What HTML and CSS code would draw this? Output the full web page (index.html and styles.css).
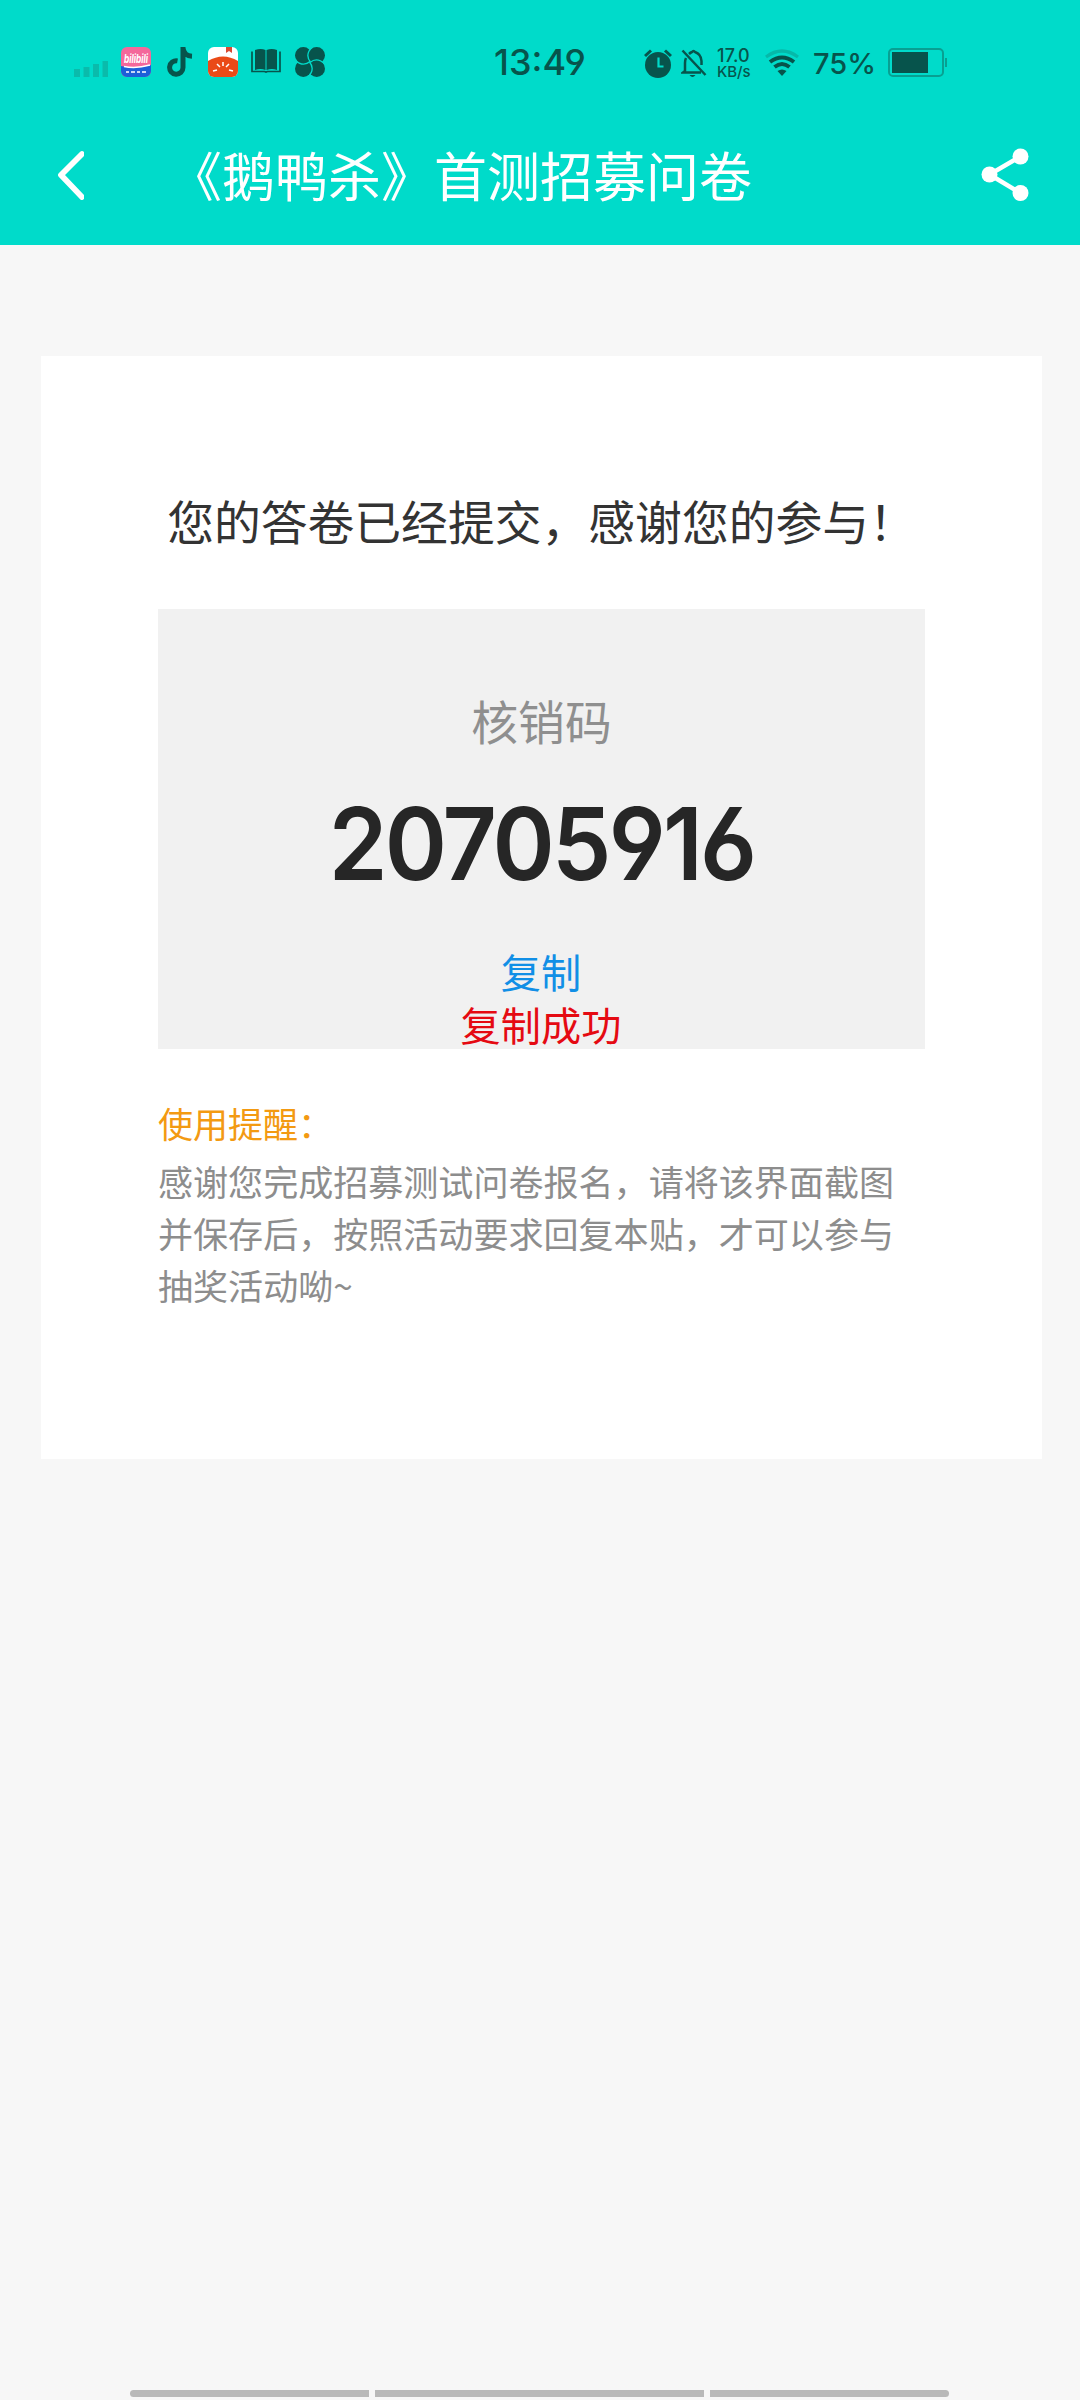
FILE: index.html
```html
<!DOCTYPE html>
<html lang="zh-CN">
<head>
<meta charset="utf-8">
<title>《鹅鸭杀》首测招募问卷</title>
<link rel="stylesheet" href="styles.css">
</head>
<body>
<header class="header">
  <div class="status">
    <div class="status-left">
      <svg class="signal" width="34" height="16" viewBox="0 0 34 16"><path d="M0 8h6v8H0zM9.500 6h6v10h-6zM19 3h6v13h-6zM28.500 0h5.500v16h-5.500z" fill="#0abbab"/></svg>
      <svg class="bili" width="30" height="30" viewBox="0 0 30 30">
        <defs><clipPath id="tile"><rect width="30" height="30" rx="6"/></clipPath></defs>
        <rect width="30" height="30" rx="6" fill="#f4689b"/>
        <path d="M0 19Q15 22.500 30 18V24a6 6 0 0 1-6 6H6a6 6 0 0 1-6-6z" fill="#1c5fd8"/>
        <text x="3" y="16" class="bili-word" textLength="24" lengthAdjust="spacingAndGlyphs">bilibili</text>
        <path d="M3 19.500q12 2.500 26-1.500M5 25h3m2 0h4m2 0h3m2 0h4" stroke="#fff" stroke-width="1.500" fill="none"/>
      </svg>
      <svg class="note" width="26" height="30" viewBox="0 0 26 30"><path d="M16 0v20.500a6.700 6.700 0 1 1-5.500-6.600M16 1c.6 5 4 8 9 8.200" fill="none" stroke="#07544c" stroke-width="5"/></svg>
      <svg class="tomato" width="30" height="30" viewBox="0 0 30 30">
        <g clip-path="url(#tile)">
          <rect width="30" height="30" fill="#fff"/>
          <path d="M0 14Q15 5 30 14V30H0z" fill="#ea4a17"/>
          <path d="M18 0h6v6l-3-2-3 2z" fill="#d94a32"/>
          <path d="M15 15v4M9 17l3 3M21 17l-3 3M5 24l4-1M25 24l-4-1" stroke="#fff" stroke-width="1.500"/>
        </g>
      </svg>
      <svg class="book" width="30" height="24" viewBox="0 0 30 24"><path d="M4 1q6-2 10.500 0v20q-5-2-10.500 0zM15.500 1q5-2 10.500 0v20q-5-2-10.500 0z" fill="#07544c"/><path d="M1 2.500v20h12.500l1.500 .5 1.500-.5H29v-20" fill="none" stroke="#07544c" stroke-width="1.700"/></svg>
      <svg class="pinwheel" width="30" height="30" viewBox="0 0 30 30"><g fill="#07544c"><circle cx="8.300" cy="8.300" r="8.300"/><circle cx="21.700" cy="8.300" r="8.300"/><circle cx="21.700" cy="21.700" r="8.300"/><circle cx="8.300" cy="21.700" r="8.300"/><path d="M8 8h14v14H8z"/></g><g fill="none" stroke="#00dbca" stroke-width="1.300"><path id="vane" d="M17 0Q9.500 8 15.500 15"/><path d="M17 0Q9.500 8 15.500 15" transform="rotate(90 15 15)"/><path d="M17 0Q9.500 8 15.500 15" transform="rotate(180 15 15)"/><path d="M17 0Q9.500 8 15.500 15" transform="rotate(270 15 15)"/></g></svg>
    </div>
    <div class="clock">13:49</div>
    <div class="status-right">
      <svg class="alarm" width="28" height="29" viewBox="0 0 28 29"><circle cx="14" cy="16" r="13" fill="#07544c"/><path d="M1 7l6-5.500M27 7l-6-5.500" stroke="#07544c" stroke-width="3"/><path d="M14.500 8.500v9h5" fill="none" stroke="#00dbca" stroke-width="2.200"/></svg>
      <svg class="bell" width="26" height="29" viewBox="0 0 26 29"><path d="M5 9Q4 11 4 14v8L2 23.500h18M8 5q1.500-1.500 3-2 1.500-2 3 0 6 2 6.500 9v4M1.500 1.500L24.500 26" fill="none" stroke="#07544c" stroke-width="2.500"/><path d="M8.500 26h6q-3 4-6 0z" fill="#07544c"/></svg>
      <div class="speed"><span class="rate">17.0</span><span class="unit">KB/s</span></div>
      <svg class="wifi" width="34" height="28" viewBox="0 0 34 28"><g fill="none" stroke-width="3.200"><path d="M1 8Q17-4 33 8" stroke="#06b9a9"/><path d="M5 13Q17 4 29 13M9.500 18Q17 12 24.500 18" stroke="#07544c" stroke-width="4"/></g><path d="M12.500 22Q17 19 21.500 22L17 27z" fill="#07544c"/></svg>
      <span class="percent">75%</span>
      <svg class="battery" width="60" height="30" viewBox="0 0 60 30"><rect x="1" y="1" width="54" height="27" rx="4" fill="none" stroke="#08a092" stroke-width="2"/><path d="M4 4h36v21H4z" fill="#07544c"/><path d="M58 10v9" stroke="#08a092" stroke-width="2"/></svg>
    </div>
  </div>
  <div class="nav">
    <svg class="back" width="28" height="50" viewBox="0 0 28 50"><path d="M26 4L5 25l21 22" fill="none" stroke="#fff" stroke-width="5.800" stroke-linecap="round" stroke-linejoin="round"/></svg>
    <h1 class="title">《鹅鸭杀》首测招募问卷</h1>
    <svg class="share" width="48" height="54" viewBox="0 0 48 54"><path d="M39.500 8.500l-31 18 31 18.500" fill="none" stroke="#fff" stroke-width="4.500"/><g fill="#fff"><circle cx="39.500" cy="8.500" r="8"/><circle cx="8.500" cy="26.500" r="8"/><circle cx="39.500" cy="45" r="8"/></g></svg>
  </div>
</header>
<main class="card">
  <p class="message">您的答卷已经提交，感谢您的参与！</p>
  <section class="code-box">
    <div class="label">核销码</div>
    <div class="code">20705916</div>
    <div class="copy">复制</div>
    <div class="copied">复制成功</div>
  </section>
  <section class="notice">
    <h2 class="notice-title">使用提醒：</h2>
    <p class="notice-text">感谢您完成招募测试问卷报名，请将该界面截图<br>并保存后，按照活动要求回复本贴，才可以参与<br>抽奖活动呦~</p>
  </section>
</main>
<footer class="gesture"><i class="bar bar-left"></i><i class="bar bar-mid"></i><i class="bar bar-right"></i></footer>
</body>
</html>
```
FILE: styles.css
```css
* { box-sizing: border-box; margin: 0; padding: 0; }
body {
  width: 1080px;
  height: 2400px;
  display: flex;
  flex-direction: column;
  background: #f7f7f7;
  font-family: "Noto Sans CJK SC", sans-serif;
  font-weight: 400;
  overflow: hidden;
}
svg { display: block; flex: none; }
.header { height: 245px; background: #00dbca; }
.status {
  height: 123px;
  display: grid;
  grid-template-columns: 490px 100px 1fr;
  align-items: center;
  color: #07544c;
  font-family: Inter, "Open Sans", sans-serif;
  font-weight: 500;
}
.status-left { display: flex; align-items: center; padding-left: 74px; }
.signal { margin-top: 14px; }
.bili { margin-left: 13px; overflow: visible; }
.bili-word { font: italic 700 12px Inter, sans-serif; fill: #fff; }
.note { margin-left: 16px; }
.tomato { margin-left: 15px; }
.book { margin: -1px 0 0 13px; }
.pinwheel { margin-left: 14px; }
.clock { text-align: center; font-size: 36px; line-height: 40px; font-feature-settings: "cv04"; white-space: nowrap; }
.status-right { display: flex; align-items: center; padding: 3px 0 0 54px; }
.bell { margin-left: 9px; }
.speed { width: 34px; margin-left: 10px; display: flex; flex-direction: column; white-space: nowrap; }
.rate { font-size: 18px; line-height: 17px; letter-spacing: .2px; }
.unit { font-size: 15px; line-height: 16px; letter-spacing: -.1px; }
.wifi { margin-left: 14px; }
.percent { margin: 2px 0 0 14px; width: 62px; font-size: 29px; line-height: 32px; white-space: nowrap; }
.battery { margin-left: 13px; }
.nav { height: 104px; display: flex; align-items: center; padding: 0 51px 0 56px; }
.title { margin: -3px 0 0 85px; flex: 1; color: #fff; font-size: 53px; line-height: 60px; font-weight: 400; white-space: nowrap; }
.card { width: 1001px; height: 1103px; margin: 111px 0 0 41px; padding: 134px 117px 0; background: #fff; }
.message { height: 60px; color: #333; font-size: 46.800px; line-height: 60px; text-align: center; white-space: nowrap; margin: 0 -10px; }
.code-box { height: 440px; margin-top: 59px; padding-top: 81px; background: #f1f1f1; text-align: center; }
.label { color: #8f8f8f; font-size: 46.800px; line-height: 60px; }
.code { height: 80px; margin-top: 53px; color: #262626; font: 600 101px/80px Inter, sans-serif; font-feature-settings: "cv03", "cv04"; letter-spacing: -3px; transform: scaleX(.935); }
.copy, .copied { font-size: 40.200px; line-height: 53px; padding-right: 1px; }
.copy { margin-top: 61px; color: #118fe6; }
.copied { color: #e50a12; }
.notice { margin-top: 48px; }
.notice-title { color: #f39a12; font-size: 35px; font-weight: 400; line-height: 52px; }
.notice-text { margin-top: 6px; color: #8d8d8d; font-size: 35.060px; line-height: 52px; white-space: nowrap; }
.gesture { margin-top: auto; padding: 0 131px 3px 130px; display: flex; gap: 6px; }
.bar { height: 7px; background: #b9b9b9; }
.bar-left { width: 239px; border-radius: 4px 0 0 4px; }
.bar-mid { width: 329px; }
.bar-right { width: 239px; border-radius: 0 4px 4px 0; }
```
